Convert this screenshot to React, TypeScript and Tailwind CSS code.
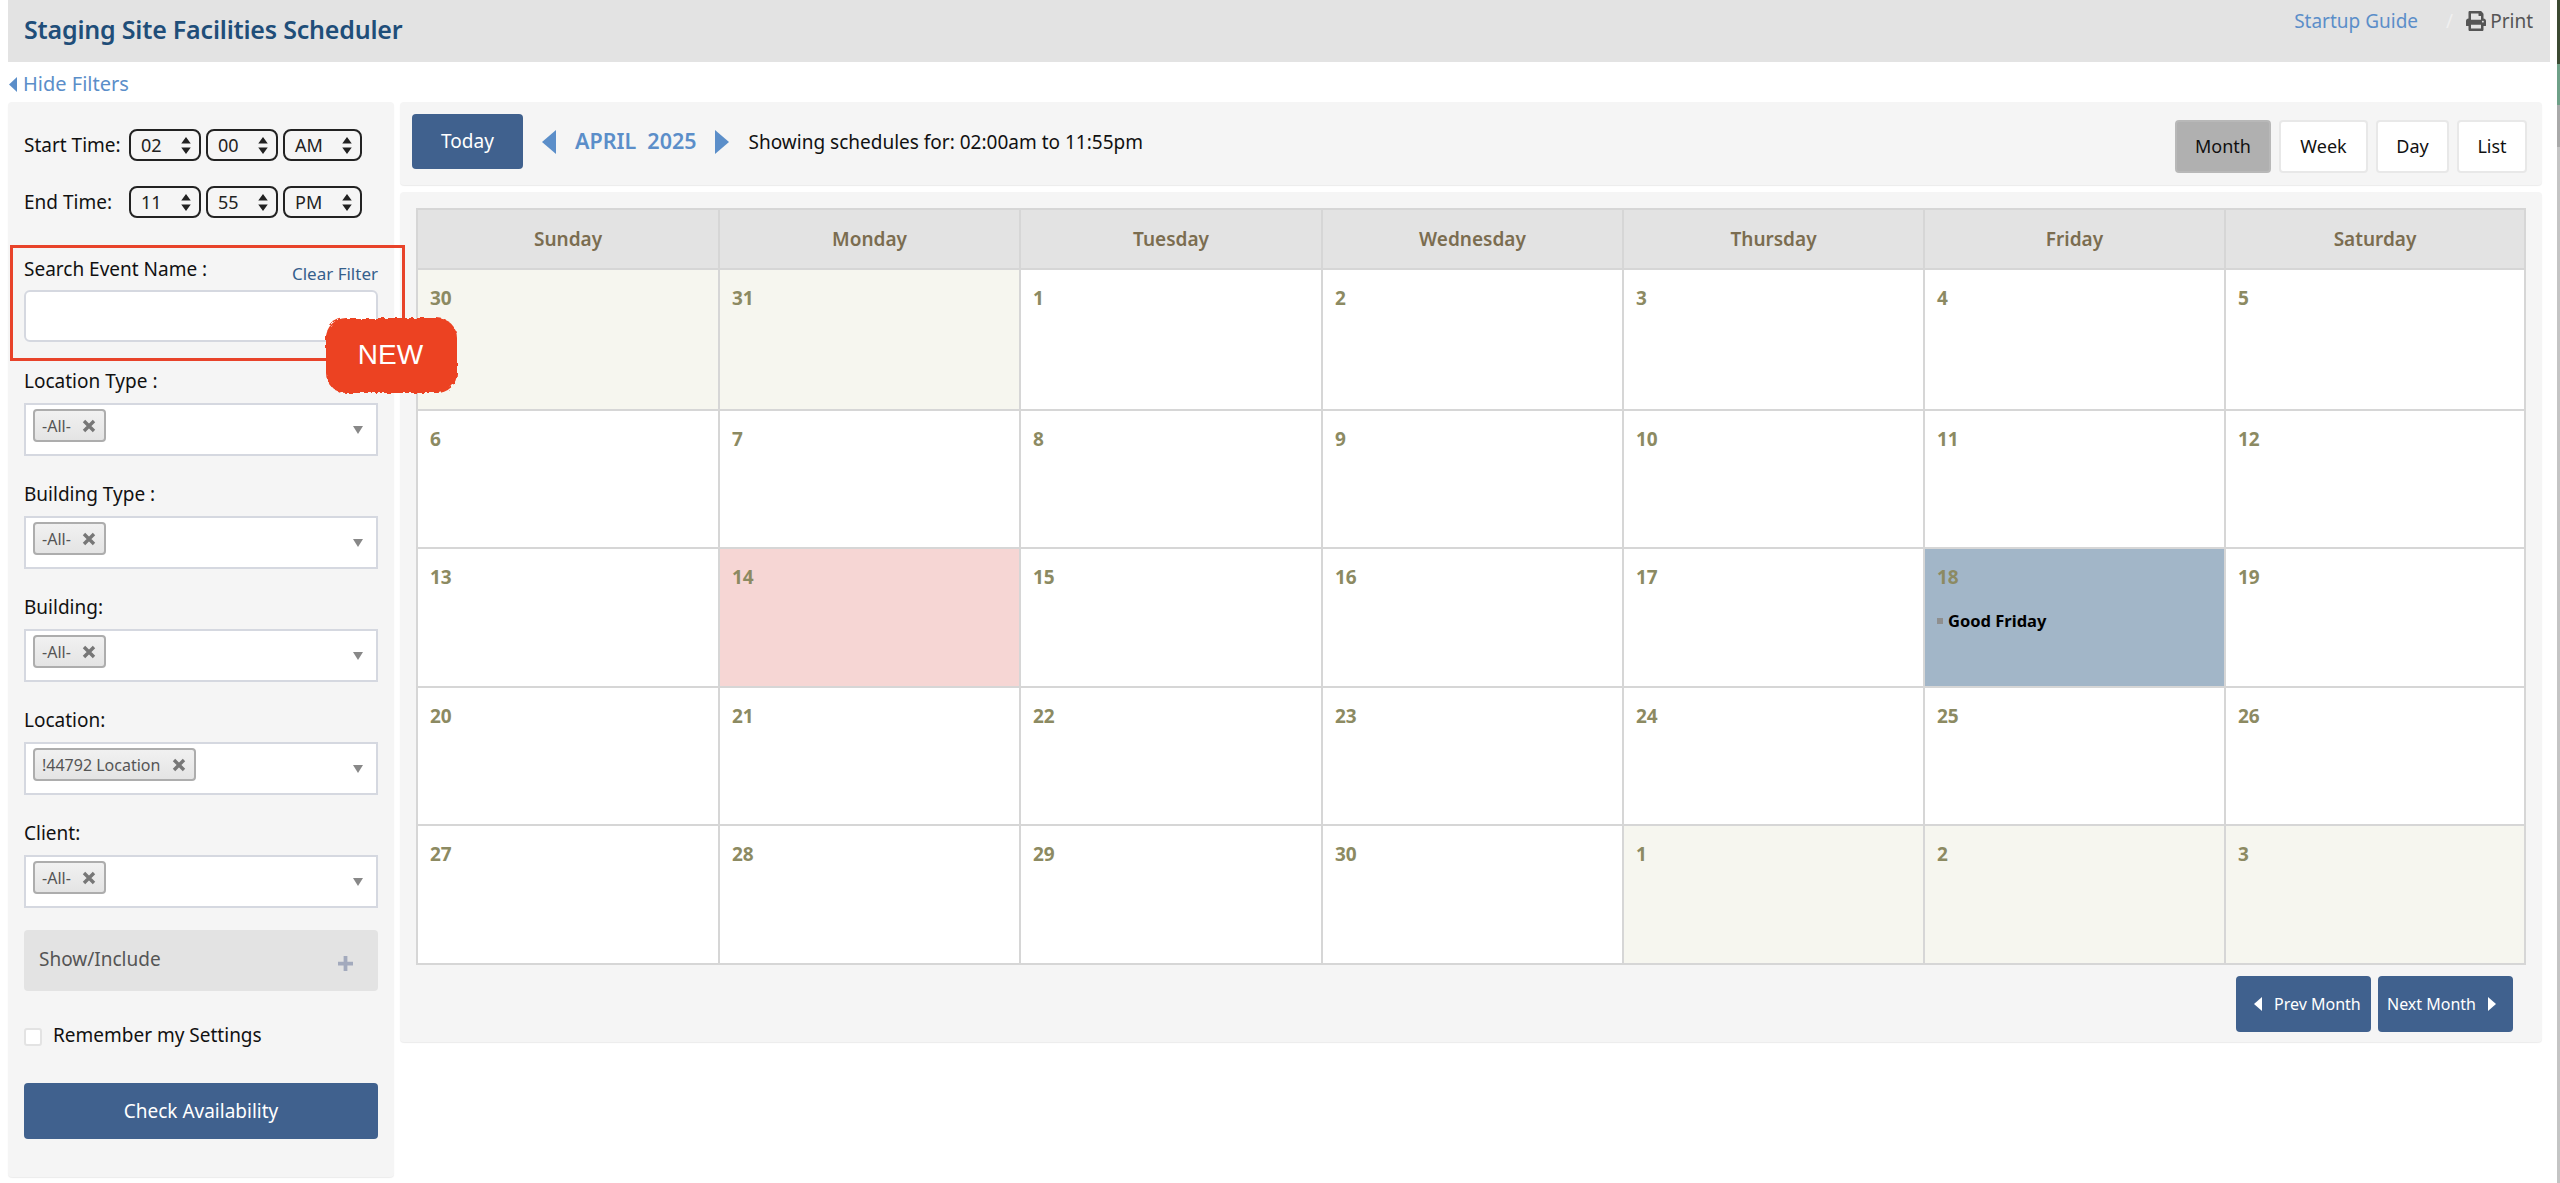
import { FaPrint } from 'react-icons/fa';

const font = { fontFamily: '"Noto Sans", sans-serif' };
const cols = 'grid grid-cols-[300px_301px_302px_301px_301px_301px_1fr]';

function Tri({ dir, className }: { dir: 'l' | 'r'; className: string }) {
  return (
    <svg viewBox="0 0 10 20" preserveAspectRatio="none" className={className} fill="currentColor">
      {dir === 'l' ? <path d="M10 0 L0 10 L10 20 Z" /> : <path d="M0 0 L10 10 L0 20 Z" />}
    </svg>
  );
}

function TimeSelect({ value, w }: { value: string; w: string }) {
  return (
    <div className={`${w} h-[32px] flex items-center justify-between rounded-[8px] border-2 border-[#222] bg-[#f5f5f5] pl-[10px] pr-[8px] text-[18px] text-[#222]`}>
      <span>{value}</span>
      <svg viewBox="0 0 10 20" className="w-[10px] h-[19px] text-[#222]" fill="currentColor">
        <path d="M5 1 L10 8 L0 8 Z M5 19 L0 12 L10 12 Z" />
      </svg>
    </div>
  );
}

function MultiSelect({ label, tag, tagW }: { label: string; tag: string; tagW: string }) {
  return (
    <div>
      <div className="h-[28px] pt-[2px] flex items-center text-[19px] text-[#111] mb-[9px]">{label}</div>
      <div className="h-[53px] border-2 border-[#d5d8e0] bg-white flex items-start justify-between pl-[7px] pr-[13px]">
        <div className={`${tagW} mt-[4px] h-[33px] flex items-center justify-between rounded-[4px] border-2 border-[#adadad] bg-gradient-to-b from-[#f1f1f1] to-[#e4e4e4] pl-[7px] pr-[8px] text-[16px] text-[#555]`}>
          <span>{tag}</span>
          <svg viewBox="0 0 14 14" className="w-[14px] h-[14px] text-[#777]" stroke="currentColor" strokeWidth={3.4}>
            <path d="M2 2 L12 12 M12 2 L2 12" />
          </svg>
        </div>
        <svg viewBox="0 0 10 8" className="w-[10px] h-[8px] mt-[21px] text-[#888]" fill="currentColor">
          <path d="M0 0 L10 0 L5 8 Z" />
        </svg>
      </div>
    </div>
  );
}

function NewBadge() {
  return (
    <div className="absolute left-[317px] top-[215px] w-[133px] h-[77px] flex items-center justify-center text-white text-[28px]" style={{ fontFamily: '"Liberation Sans", sans-serif' }}>
      <svg viewBox="0 0 133 77" className="absolute inset-0 w-[133px] h-[77px] overflow-visible">
        <defs>
          <filter id="rough" x="-10%" y="-10%" width="120%" height="120%">
            <feTurbulence type="fractalNoise" baseFrequency="0.18" numOctaves="2" seed="4" />
            <feDisplacementMap in="SourceGraphic" scale="5" />
          </filter>
        </defs>
        <rect x="1" y="1" width="131" height="75" rx="20" fill="#ec4324" filter="url(#rough)" />
      </svg>
      <span className="relative -mt-[2px] -ml-[2px]">NEW</span>
    </div>
  );
}

function Sidebar() {
  return (
    <div className="relative w-[386px] h-[1075px] shrink-0 rounded-[4px] bg-[#f5f5f5] shadow-[0_1px_1px_rgba(0,0,0,0.08)] px-[16px] pt-[27px]">
      <div className="flex items-center h-[32px]">
        <span className="w-[105px] text-[19px] text-[#111]">Start Time:</span>
        <div className="flex gap-[5px]">
          <TimeSelect value="02" w="w-[72px]" />
          <TimeSelect value="00" w="w-[72px]" />
          <TimeSelect value="AM" w="w-[79px]" />
        </div>
      </div>
      <div className="flex items-center h-[32px] mt-[25px]">
        <span className="w-[105px] text-[19px] text-[#111]">End Time:</span>
        <div className="flex gap-[5px]">
          <TimeSelect value="11" w="w-[72px]" />
          <TimeSelect value="55" w="w-[72px]" />
          <TimeSelect value="PM" w="w-[79px]" />
        </div>
      </div>

      <div className="mt-[36px]">
        <div className="flex justify-between items-start h-[28px]">
          <span className="mt-[1px] text-[19px] leading-[28px] text-[#111]">Search Event Name :</span>
          <span className="mt-[6px] text-[17px] leading-[28px] text-[#35608c]">Clear Filter</span>
        </div>
        <div className="mt-[8px] h-[52px] rounded-[6px] border-2 border-[#d5d8e0] bg-white" />
      </div>

      <div className="mt-[24px] flex flex-col gap-[23px]">
        <MultiSelect label="Location Type :" tag="-All-" tagW="w-[73px]" />
        <MultiSelect label="Building Type :" tag="-All-" tagW="w-[73px]" />
        <MultiSelect label="Building:" tag="-All-" tagW="w-[73px]" />
        <MultiSelect label="Location:" tag="!44792 Location" tagW="w-[163px]" />
        <MultiSelect label="Client:" tag="-All-" tagW="w-[73px]" />
      </div>

      <div className="mt-[22px] h-[61px] rounded-[4px] bg-[#e3e3e3] flex items-center justify-between pl-[15px] pr-[25px] text-[19px] text-[#555]">
        <span className="-mt-[3px]">Show/Include</span>
        <svg viewBox="0 0 16 16" className="w-[15px] h-[15px] mt-[6px] text-[#a3aabd]" fill="currentColor">
          <path d="M6 0 H10 V6 H16 V10 H10 V16 H6 V10 H0 V6 H6 Z" />
        </svg>
      </div>

      <div className="mt-[30px] flex items-center h-[28px]">
        <span className="w-[18px] h-[18px] mt-[3px] rounded-[3px] border-2 border-[#e3e3e3] bg-white" />
        <span className="ml-[11px] text-[19px] text-[#111]">Remember my Settings</span>
      </div>

      <button className="mt-[34px] w-full h-[56px] rounded-[4px] bg-[#40618e] text-white text-[19px]">Check Availability</button>

      {/* red highlight drawn over the form */}
      <div className="absolute left-[2px] top-[143px] w-[395px] h-[116px] border-[3px] border-[#e8432a] pointer-events-none" />
      <NewBadge />
    </div>
  );
}

const weeks: { d: number; muted?: boolean; bg?: string; ev?: string }[][] = [
  [{ d: 30, muted: true }, { d: 31, muted: true }, { d: 1 }, { d: 2 }, { d: 3 }, { d: 4 }, { d: 5 }],
  [{ d: 6 }, { d: 7 }, { d: 8 }, { d: 9 }, { d: 10 }, { d: 11 }, { d: 12 }],
  [{ d: 13 }, { d: 14, bg: 'bg-[#f6d6d4]' }, { d: 15 }, { d: 16 }, { d: 17 }, { d: 18, bg: 'bg-[#a2b6c8]', ev: 'Good Friday' }, { d: 19 }],
  [{ d: 20 }, { d: 21 }, { d: 22 }, { d: 23 }, { d: 24 }, { d: 25 }, { d: 26 }],
  [{ d: 27 }, { d: 28 }, { d: 29 }, { d: 30 }, { d: 1, muted: true }, { d: 2, muted: true }, { d: 3, muted: true }],
];

const days = ['Sunday', 'Monday', 'Tuesday', 'Wednesday', 'Thursday', 'Friday', 'Saturday'];

function Calendar() {
  return (
    <div className="w-[2110px] mt-[16px] ml-[16px] border-2 border-[#d6d6d6] bg-white">
      <div className={`${cols} h-[60px] bg-[#e3e3e3] border-b-2 border-[#d6d6d6]`}>
        {days.map((d, i) => (
          <div key={d} className={`flex items-center justify-center text-[19px] font-semibold text-[#7b6d50] ${i ? 'border-l-2 border-[#d6d6d6]' : ''}`}>{d}</div>
        ))}
      </div>
      {weeks.map((w, wi) => (
        <div key={wi} className={`${cols} h-[138.6px] ${wi ? 'border-t-2 border-[#d6d6d6]' : ''}`}>
          {w.map((c, i) => (
            <div key={i} className={`pl-[12px] pt-[15px] ${i ? 'border-l-2 border-[#d6d6d6]' : ''} ${c.bg ?? (c.muted ? 'bg-[#f6f6ef]' : 'bg-white')}`}>
              <div className="text-[19px] font-bold leading-[26px] text-[#8c8a62]">{c.d}</div>
              {c.ev && (
                <div className="mt-[19px] flex items-center text-[16.5px] leading-[24px] font-bold text-black">
                  <span className="w-[6px] h-[6px] bg-[#8f8f8f] mr-[5px]" />
                  {c.ev}
                </div>
              )}
            </div>
          ))}
        </div>
      ))}
    </div>
  );
}

export default function App() {
  return (
    <div className="relative w-[2560px] h-[1183px] overflow-hidden bg-white pl-[8px] pr-[10px]" style={font}>
      <div className="h-[62px] bg-[#e3e3e3] flex justify-between pl-[16px] pr-[17px]">
        <div className="text-[25px] font-semibold text-[#1f4e79] tracking-[-0.2px] leading-[58px]">Staging Site Facilities Scheduler</div>
        <div className="flex items-start pt-[7px] text-[19px]">
          <span className="text-[#5b8ec9]">Startup Guide</span>
          <span className="ml-[28px] text-[#f0f0f0]">/</span>
          <span className="ml-[13px] flex items-center text-[#555]">
            <FaPrint className="w-[20px] h-[20px] mr-[4px]" />
            Print
          </span>
        </div>
      </div>

      <div className="h-[40px] flex items-center pt-[4px] text-[20px] text-[#5b8ec9]">
        <Tri dir="l" className="ml-[1px] w-[8px] h-[15px] mr-[6px]" />
        Hide Filters
      </div>

      <div className="flex gap-[6px]">
        <Sidebar />
        <div className="w-[2142px]">
          <div className="h-[83px] rounded-[4px] bg-[#f5f5f5] shadow-[0_1px_1px_rgba(0,0,0,0.08)] flex items-start pl-[12px] pr-[15px] pt-[12px]">
            <button className="w-[111px] h-[55px] rounded-[4px] bg-[#40618e] text-white text-[19px]">Today</button>
            <Tri dir="l" className="ml-[19px] mt-[16px] w-[14px] h-[24px] text-[#5b8ec9]" />
            <span className="ml-[19px] mt-[10px] text-[21.5px] font-semibold text-[#5b8ec9] leading-[34px]">APRIL&nbsp;&nbsp;2025</span>
            <Tri dir="r" className="ml-[18px] mt-[16px] w-[14px] h-[24px] text-[#5b8ec9]" />
            <span className="ml-[20px] mt-[13px] text-[19px] leading-[30px] text-[#111]">Showing schedules for: 02:00am to 11:55pm</span>
            <div className="ml-auto mt-[6px] flex gap-[8px] text-[18px] text-[#111]">
              <span className="w-[96px] h-[53px] flex items-center justify-center rounded-[4px] bg-[#b0b0b0] border-2 border-[#b8b8b8]">Month</span>
              <span className="w-[89px] h-[53px] flex items-center justify-center rounded-[4px] bg-white border-2 border-[#e8e8e8]">Week</span>
              <span className="w-[73px] h-[53px] flex items-center justify-center rounded-[4px] bg-white border-2 border-[#e8e8e8]">Day</span>
              <span className="w-[70px] h-[53px] flex items-center justify-center rounded-[4px] bg-white border-2 border-[#e8e8e8]">List</span>
            </div>
          </div>
          <div className="mt-[7px] h-[850px] rounded-[4px] bg-[#f5f5f5] shadow-[0_1px_1px_rgba(0,0,0,0.08)] overflow-hidden">
            <Calendar />
            <div className="flex justify-end gap-[7px] mt-[11px] pr-[29px]">
              <button className="w-[135px] h-[56px] pl-[18px] rounded-[4px] bg-[#40618e] text-white text-[16px] flex items-center gap-[12px]">
                <Tri dir="l" className="w-[8px] h-[14px]" />
                Prev Month
              </button>
              <button className="w-[135px] h-[56px] pl-[9px] rounded-[4px] bg-[#40618e] text-white text-[16px] flex items-center gap-[12px]">
                Next Month
                <Tri dir="r" className="w-[8px] h-[14px]" />
              </button>
            </div>
          </div>
        </div>
      </div>

      {/* sliver of the window behind, at the right edge */}
      <div className="absolute right-0 top-0 w-[3px] h-full flex flex-col">
        <div className="h-[64px] bg-[#3c4a33]" />
        <div className="h-[41px] bg-[#6fa088]" />
        <div className="h-[42px] bg-[#a9a9a9]" />
        <div className="flex-1 bg-[#c4c4c4]" />
      </div>
    </div>
  );
}
